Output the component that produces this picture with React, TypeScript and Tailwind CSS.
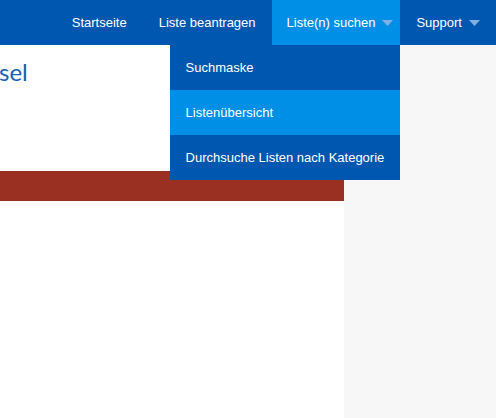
import React from 'react';

const Caret = () => (
  <svg width="11" height="6" viewBox="0 0 11 6" className="ml-[7px] mt-[1px]">
    <path d="M0 0 L11 0 L5.5 6 Z" fill="#7fb0e3" />
  </svg>
);

const menuItems = ['Suchmaske', 'Listenübersicht', 'Durchsuche Listen nach Kategorie'];

const App: React.FC = () => {
  return (
    <div className="w-full h-[418px] flex flex-col overflow-hidden bg-white" style={{ fontFamily: '"Liberation Sans", Arial, sans-serif' }}>
      <nav className="h-[45px] bg-[#0057b0] flex justify-end items-stretch text-[13px] text-white shrink-0">
        <a className="flex items-center pl-4 pr-4">Startseite</a>
        <a className="flex items-center pl-4 pr-4">Liste beantragen</a>
        <div className="relative flex items-center pl-[15px] pr-[7px] bg-[#008fe6]">
          <span>Liste(n) suchen</span>
          <Caret />
          <ul className="absolute top-full left-[-102px] w-[230px] z-10">
            {menuItems.map((item, i) => (
              <li
                key={item}
                className={`h-[45px] flex items-center pl-4 ${i === 1 ? 'bg-[#008fe6]' : 'bg-[#0057b0]'}`}
              >
                {item}
              </li>
            ))}
          </ul>
        </div>
        <div className="flex items-center pl-4 pr-4">
          <span>Support</span>
          <Caret />
        </div>
      </nav>
      <div className="flex flex-1">
        <main className="w-[344px] flex flex-col bg-white">
          <div className="h-[126px] pt-[9px]">
            <h1
              className="ml-[-1px] text-[24px] leading-[36px] font-normal text-[#1760b8]"
              style={{ fontFamily: 'Lato, "Open Sans", sans-serif' }}
            >
              sel
            </h1>
          </div>
          <div className="h-[30px] bg-[#9a3022]" />
        </main>
        <aside className="flex-1 bg-[#f7f7f7]" />
      </div>
    </div>
  );
};

export default App;
